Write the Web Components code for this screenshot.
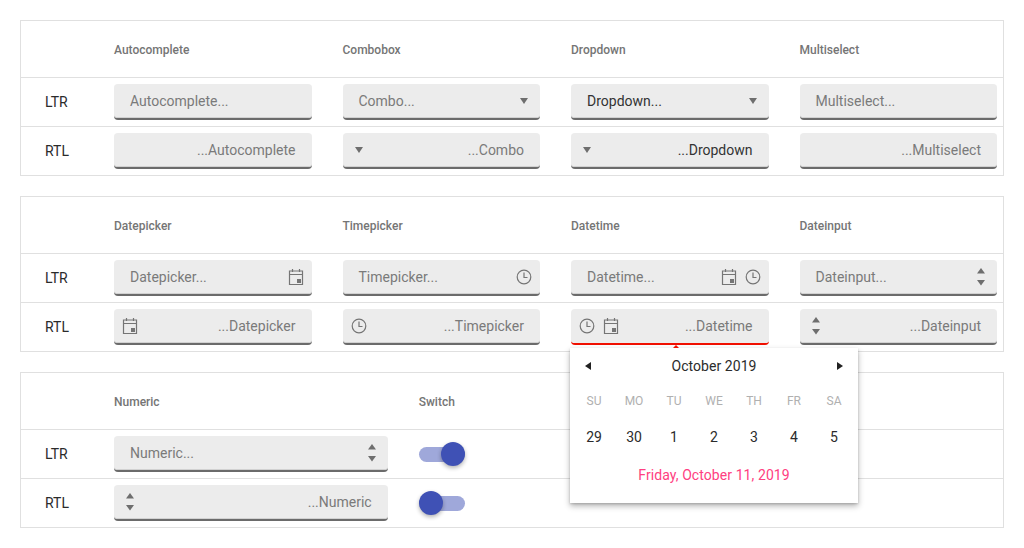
<!DOCTYPE html>
<html>
<head>
<meta charset="utf-8">
<title>Inputs</title>
<style>
  html, body { margin: 0; padding: 0; background: #fff; }
  body {
    padding: 20px 20px 20px 20px;
    font-family: Roboto, "Liberation Sans", sans-serif;
    color: #2b2b2b;
  }
</style>
</head>
<body>
  <demo-table cols="4" style="margin-bottom:20px">
    <demo-row head cols="4">
      <span></span>
      <span>Autocomplete</span><span>Combobox</span><span>Dropdown</span><span>Multiselect</span>
    </demo-row>
    <demo-row cols="4">
      LTR
      <demo-field text="Autocomplete..."></demo-field>
      <demo-field text="Combo..." icons="drop"></demo-field>
      <demo-field text="Dropdown..." icons="drop" value></demo-field>
      <demo-field text="Multiselect..."></demo-field>
    </demo-row>
    <demo-row cols="4" last>
      RTL
      <demo-field text="...Autocomplete" rtl></demo-field>
      <demo-field text="...Combo" icons="drop" rtl></demo-field>
      <demo-field text="...Dropdown" icons="drop" rtl value></demo-field>
      <demo-field text="...Multiselect" rtl></demo-field>
    </demo-row>
  </demo-table>

  <demo-table cols="4" style="margin-bottom:20px">
    <demo-row head cols="4">
      <span></span>
      <span>Datepicker</span><span>Timepicker</span><span>Datetime</span><span>Dateinput</span>
    </demo-row>
    <demo-row cols="4">
      LTR
      <demo-field text="Datepicker..." icons="cal"></demo-field>
      <demo-field text="Timepicker..." icons="clock"></demo-field>
      <demo-field text="Datetime..." icons="cal clock"></demo-field>
      <demo-field text="Dateinput..." icons="spin"></demo-field>
    </demo-row>
    <demo-row cols="4" last>
      RTL
      <demo-field text="...Datepicker" icons="cal" rtl></demo-field>
      <demo-field text="...Timepicker" icons="clock" rtl></demo-field>
      <demo-field text="...Datetime" icons="cal clock" rtl focused>
        <demo-calendar></demo-calendar>
      </demo-field>
      <demo-field text="...Dateinput" icons="spin" rtl></demo-field>
    </demo-row>
  </demo-table>

  <demo-table cols="3">
    <demo-row head cols="3">
      <span></span>
      <span>Numeric</span><span>Switch</span><span></span>
    </demo-row>
    <demo-row cols="3">
      LTR
      <demo-field text="Numeric..." icons="spin"></demo-field>
      <demo-switch on></demo-switch>
      <span></span>
    </demo-row>
    <demo-row cols="3" last>
      RTL
      <demo-field text="...Numeric" icons="spin" rtl></demo-field>
      <demo-switch></demo-switch>
      <span></span>
    </demo-row>
  </demo-table>

<script>
const ICONS = {
  drop: `<svg width="24" height="24" viewBox="0 0 24 24"><path d="M8 9h8l-4 6z" fill="#6e6e6e"/></svg>`,
  spin: `<svg width="24" height="36" viewBox="0 0 24 36"><path d="M8 14.500l4-5.500 4 5.500z" fill="#6e6e6e"/><path d="M8 21h8l-4 5.500z" fill="#6e6e6e"/></svg>`,
  cal: `<svg width="24" height="24" viewBox="0 0 24 24" fill="none" stroke="#757575">
    <path d="M5.500 6h13v13.500h-13zM5.500 9.500h13M8.500 4v3M15.500 4v3" stroke-width="1.200"/>
    <rect x="13" y="14" width="4" height="4" fill="#757575" stroke="none"/></svg>`,
  clock: `<svg width="24" height="24" viewBox="0 0 24 24" fill="none" stroke="#757575">
    <circle cx="12" cy="12" r="6.800" stroke-width="1.200"/><path d="M12 7.500v5h3.500" stroke-width="1.200"/></svg>`
}

class DemoTable extends HTMLElement {
  constructor () {
    super()
    this.shadow = this.attachShadow({ mode: 'open' })
  }

  connectedCallback () {
    this.shadow.innerHTML = /* html */`
      <style>
        :host { display: block; border: 1px solid #e0e0e0; }
      </style>
      <slot></slot>
    `
  }
}

class DemoRow extends HTMLElement {
  constructor () {
    super()
    this.shadow = this.attachShadow({ mode: 'open' })
  }

  connectedCallback () {
    const cols = this.getAttribute('cols')
    this.shadow.innerHTML = /* html */`
      <style>
        :host {
          display: grid;
          grid-template-columns: 38px repeat(${cols}, 1fr);
          column-gap: 31px;
          align-items: center;
          height: 48px;
          padding: 0 6px 0 24px;
          border-bottom: 1px solid #e0e0e0;
          font-size: 14px;
          color: #2b2b2b;
        }
        :host([last]) { border-bottom: none; }
        :host([head]) {
          box-sizing: border-box;
          height: 57px;
          padding-top: 2px;
          font-size: 12px;
          font-weight: 500;
          color: #757575;
        }
      </style>
      <slot></slot>
    `
  }
}

class DemoField extends HTMLElement {
  constructor () {
    super()
    this.shadow = this.attachShadow({ mode: 'open' })
  }

  connectedCallback () {
    const icons = (this.getAttribute('icons') || '').split(' ').filter(Boolean)
    const list = icons.map(name => `<span class="icon">${ICONS[name]}</span>`).join('')
    this.shadow.innerHTML = /* html */`
      <style>
        :host {
          display: block;
          position: relative;
          font-size: 14px;
        }
        .box {
          display: flex;
          align-items: center;
          justify-content: space-between;
          box-sizing: border-box;
          height: 36px;
          padding: 0 4px 0 16px;
          background: #ececec;
          border-bottom: 2px solid #6b6b6b;
          border-radius: 4px;
          box-shadow: inset 0 -1px 0 rgba(107, 107, 107, .2);
          color: #7a7a7a;
        }
        :host([rtl]) .box { flex-direction: row-reverse; padding: 0 16px 0 4px; }
        :host([value]) .box { color: #333; }
        :host([focused]) .box {
          border-bottom-color: #f01000;
          box-shadow: none;
        }
        :host([rtl]) .icons { flex-direction: row-reverse; }
        .icons { display: flex; }
        .icon { display: flex; align-items: center; justify-content: center; width: 24px; height: 34px; }
      </style>
      <div class="box">
        <span class="text">${this.getAttribute('text')}</span>
        <span class="icons">${list}</span>
      </div>
      <slot></slot>
    `
  }
}

class DemoSwitch extends HTMLElement {
  constructor () {
    super()
    this.shadow = this.attachShadow({ mode: 'open' })
  }

  connectedCallback () {
    this.shadow.innerHTML = /* html */`
      <style>
        :host {
          display: flex;
          align-items: center;
          position: relative;
          width: 46px;
          height: 24px;
        }
        .track { width: 46px; height: 15px; border-radius: 8px; background: #9fa8da; }
        .thumb {
          position: absolute;
          left: 0;
          top: 0;
          width: 24px;
          height: 24px;
          border-radius: 50%;
          background: #3f51b5;
          box-shadow: 0 2px 4px rgba(0, 0, 0, .3);
        }
        :host([on]) .thumb { left: 22px; }
      </style>
      <div class="track"></div>
      <div class="thumb"></div>
    `
  }
}

class DemoCalendar extends HTMLElement {
  constructor () {
    super()
    this.shadow = this.attachShadow({ mode: 'open' })
  }

  connectedCallback () {
    const heads = ['SU', 'MO', 'TU', 'WE', 'TH', 'FR', 'SA']
    const days = [29, 30, 1, 2, 3, 4, 5]
    this.shadow.innerHTML = /* html */`
      <style>
        :host {
          display: block;
          position: absolute;
          left: -1px;
          top: 39px;
          width: 288px;
          height: 155px;
          box-sizing: border-box;
          padding: 0 4px;
          background: #fff;
          box-shadow: 0 3px 6px rgba(0, 0, 0, .3), 0 1px 2px rgba(0, 0, 0, .15);
          z-index: 5;
          color: #2b2b2b;
          font-size: 14px;
        }
        .tip {
          position: absolute;
          left: 103px;
          top: -3px;
          width: 0;
          height: 0;
          border-left: 3px solid transparent;
          border-right: 3px solid transparent;
          border-bottom: 3px solid #f01000;
        }
        .top {
          display: flex;
          align-items: center;
          justify-content: space-between;
          height: 36px;
          padding: 0 10px;
        }
        .title { font-weight: 400; letter-spacing: .05px; }
        .grid { display: grid; grid-template-columns: repeat(7, 40px); justify-items: center; }
        .dow { height: 34px; line-height: 34px; font-size: 12px; color: #b0b0b0; }
        .day { height: 38px; line-height: 38px; }
        .foot { height: 38px; line-height: 38px; text-align: center; color: #ff4081; letter-spacing: .08px; }
      </style>
      <div class="tip"></div>
      <div class="top">
        <svg width="8" height="8" viewBox="0 0 8 8"><path d="M7 0v8L1 4z" fill="#212121"/></svg>
        <span class="title">October 2019</span>
        <svg width="8" height="8" viewBox="0 0 8 8"><path d="M1 0v8l6-4z" fill="#212121"/></svg>
      </div>
      <div class="grid">${heads.map(h => `<span class="dow">${h}</span>`).join('')}</div>
      <div class="grid">${days.map(d => `<span class="day">${d}</span>`).join('')}</div>
      <div class="foot">Friday, October 11, 2019</div>
    `
  }
}

customElements.define('demo-table', DemoTable)
customElements.define('demo-row', DemoRow)
customElements.define('demo-field', DemoField)
customElements.define('demo-switch', DemoSwitch)
customElements.define('demo-calendar', DemoCalendar)
</script>
</body>
</html>
